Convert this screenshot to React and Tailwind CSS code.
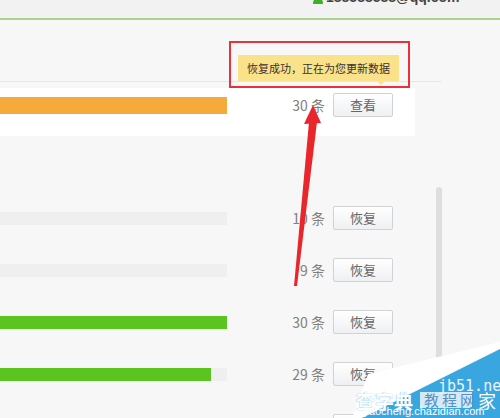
export default function App() {
  const rows = [
    { n: "10", fill: 0, color: "#5cc41f" },
    { n: "9", fill: 0, color: "#5cc41f" },
    { n: "30", fill: 227, color: "#5cc41f" },
    { n: "29", fill: 211, color: "#5cc41f" },
    { n: "30", fill: 0, color: "#5cc41f" },
  ];
  const btn =
    "w-[60px] h-[24px] flex items-center justify-center rounded-[2px] border border-[#cfd3d6] bg-gradient-to-b from-white to-[#eef0f2] text-[13px] text-[#666]";
  return (
    <div className="relative w-[500px] h-[418px] overflow-hidden bg-[#f7f7f7] font-['Microsoft_YaHei','Noto_Sans_CJK_SC',sans-serif]">
      {/* header */}
      <div className="h-[20px] bg-[#f2f2f2] border-b-2 border-[#a6d68a] overflow-hidden">
        <div className="flex items-center gap-[3px] pl-[313px] -mt-[11px]">
          <svg width="10" height="14" viewBox="0 0 10 14">
            <circle cx="5" cy="4" r="3.5" fill="#3fae2a" />
            <path d="M0 14 Q0 8 5 8 Q10 8 10 14 Z" fill="#3fae2a" />
          </svg>
          <span className="text-[14px] leading-[16px] font-bold text-[#444] font-['Liberation_Sans',sans-serif]">
            188588588@qq.com
          </span>
        </div>
      </div>

      {/* top area */}
      <div className="h-[62px] w-[441px] border-b border-[#e6e6e6]" />

      {/* highlighted row */}
      <div className="mt-[6px] h-[48px] w-[415px] bg-white pt-[5px]">
        <div className="flex items-center h-[24px]">
          <div className="w-[227px] h-[17px] bg-[#f5aa3b]" />
          <div className="w-[98px] text-right text-[14px] text-[#808080]">30 条</div>
          <div className={"ml-[8px] " + btn}>查看</div>
        </div>
      </div>

      {/* list with scrollbar */}
      <div className="mt-[51px] flex">
        <div className="w-[436px] pt-[5px] flex flex-col">
          {rows.map((r, i) => (
            <div key={i} className="h-[52px] flex items-center">
              <div className="w-[227px] h-[13px] bg-[#efefef] flex">
                <div className="h-full bg-[#5cc41f]" style={{ width: r.fill }} />
              </div>
              <div className="w-[98px] text-right text-[14px] text-[#808080]">{r.n} 条</div>
              <div className={"ml-[8px] " + btn}>恢复</div>
            </div>
          ))}
        </div>
        <div className="w-[6px] h-[240px] rounded-full bg-[#dedede]" />
      </div>

      {/* tooltip */}
      <div className="absolute left-[238px] top-[55px] w-[161px] h-[26px] bg-[#fae28a] flex items-center justify-center text-[11px] text-[#333]">
        恢复成功，正在为您更新数据
        <div className="absolute left-[139px] -bottom-[4px] w-0 h-0 border-l-[4px] border-r-[4px] border-t-[4px] border-l-transparent border-r-transparent border-t-[#fae28a]" />
      </div>

      {/* red annotation box */}
      <div className="absolute left-[229px] top-[41px] w-[181px] h-[47px] border-2 border-[#e6323a]" />

      {/* arrow + watermark drawing */}
      <svg className="absolute left-0 top-0 pointer-events-none" width="500" height="418" viewBox="0 0 500 418">
        <polygon points="313,105 304,124 321,123" fill="#e8262b" />
        <polygon points="309,122 317,122 297,286 294,286" fill="#e8262b" />
        <polygon points="352,418 368,374 500,342 500,418" fill="#ffffff" />
        <polygon points="362,418 500,349 500,418" fill="#3aa6df" />
      </svg>
      <div className="absolute left-[420px] top-[392px] w-[52px] h-[16px] bg-[#e8f1f8] opacity-90" />
      <span className="absolute left-[438px] top-[378px] text-[15px] leading-[16px] text-[#e8f4ff] font-['DejaVu_Sans_Mono',monospace]">jb51.net</span>
      <span className="absolute left-[356px] top-[390px] text-[19px] leading-[22px] text-white font-bold [text-shadow:0_0_1px_#3aa6df]">查字典</span>
      <span className="absolute left-[424px] top-[391px] text-[15px] leading-[18px] tracking-[3px] text-[#5b8fc4]">教程网</span>
      <span className="absolute left-[478px] top-[390px] text-[18px] leading-[20px] text-white">家</span>
      <span className="absolute left-[364px] top-[405px] text-[11px] leading-[13px] text-white font-['Liberation_Sans',sans-serif]">jiaocheng.chazidian.com</span>
    </div>
  );
}
